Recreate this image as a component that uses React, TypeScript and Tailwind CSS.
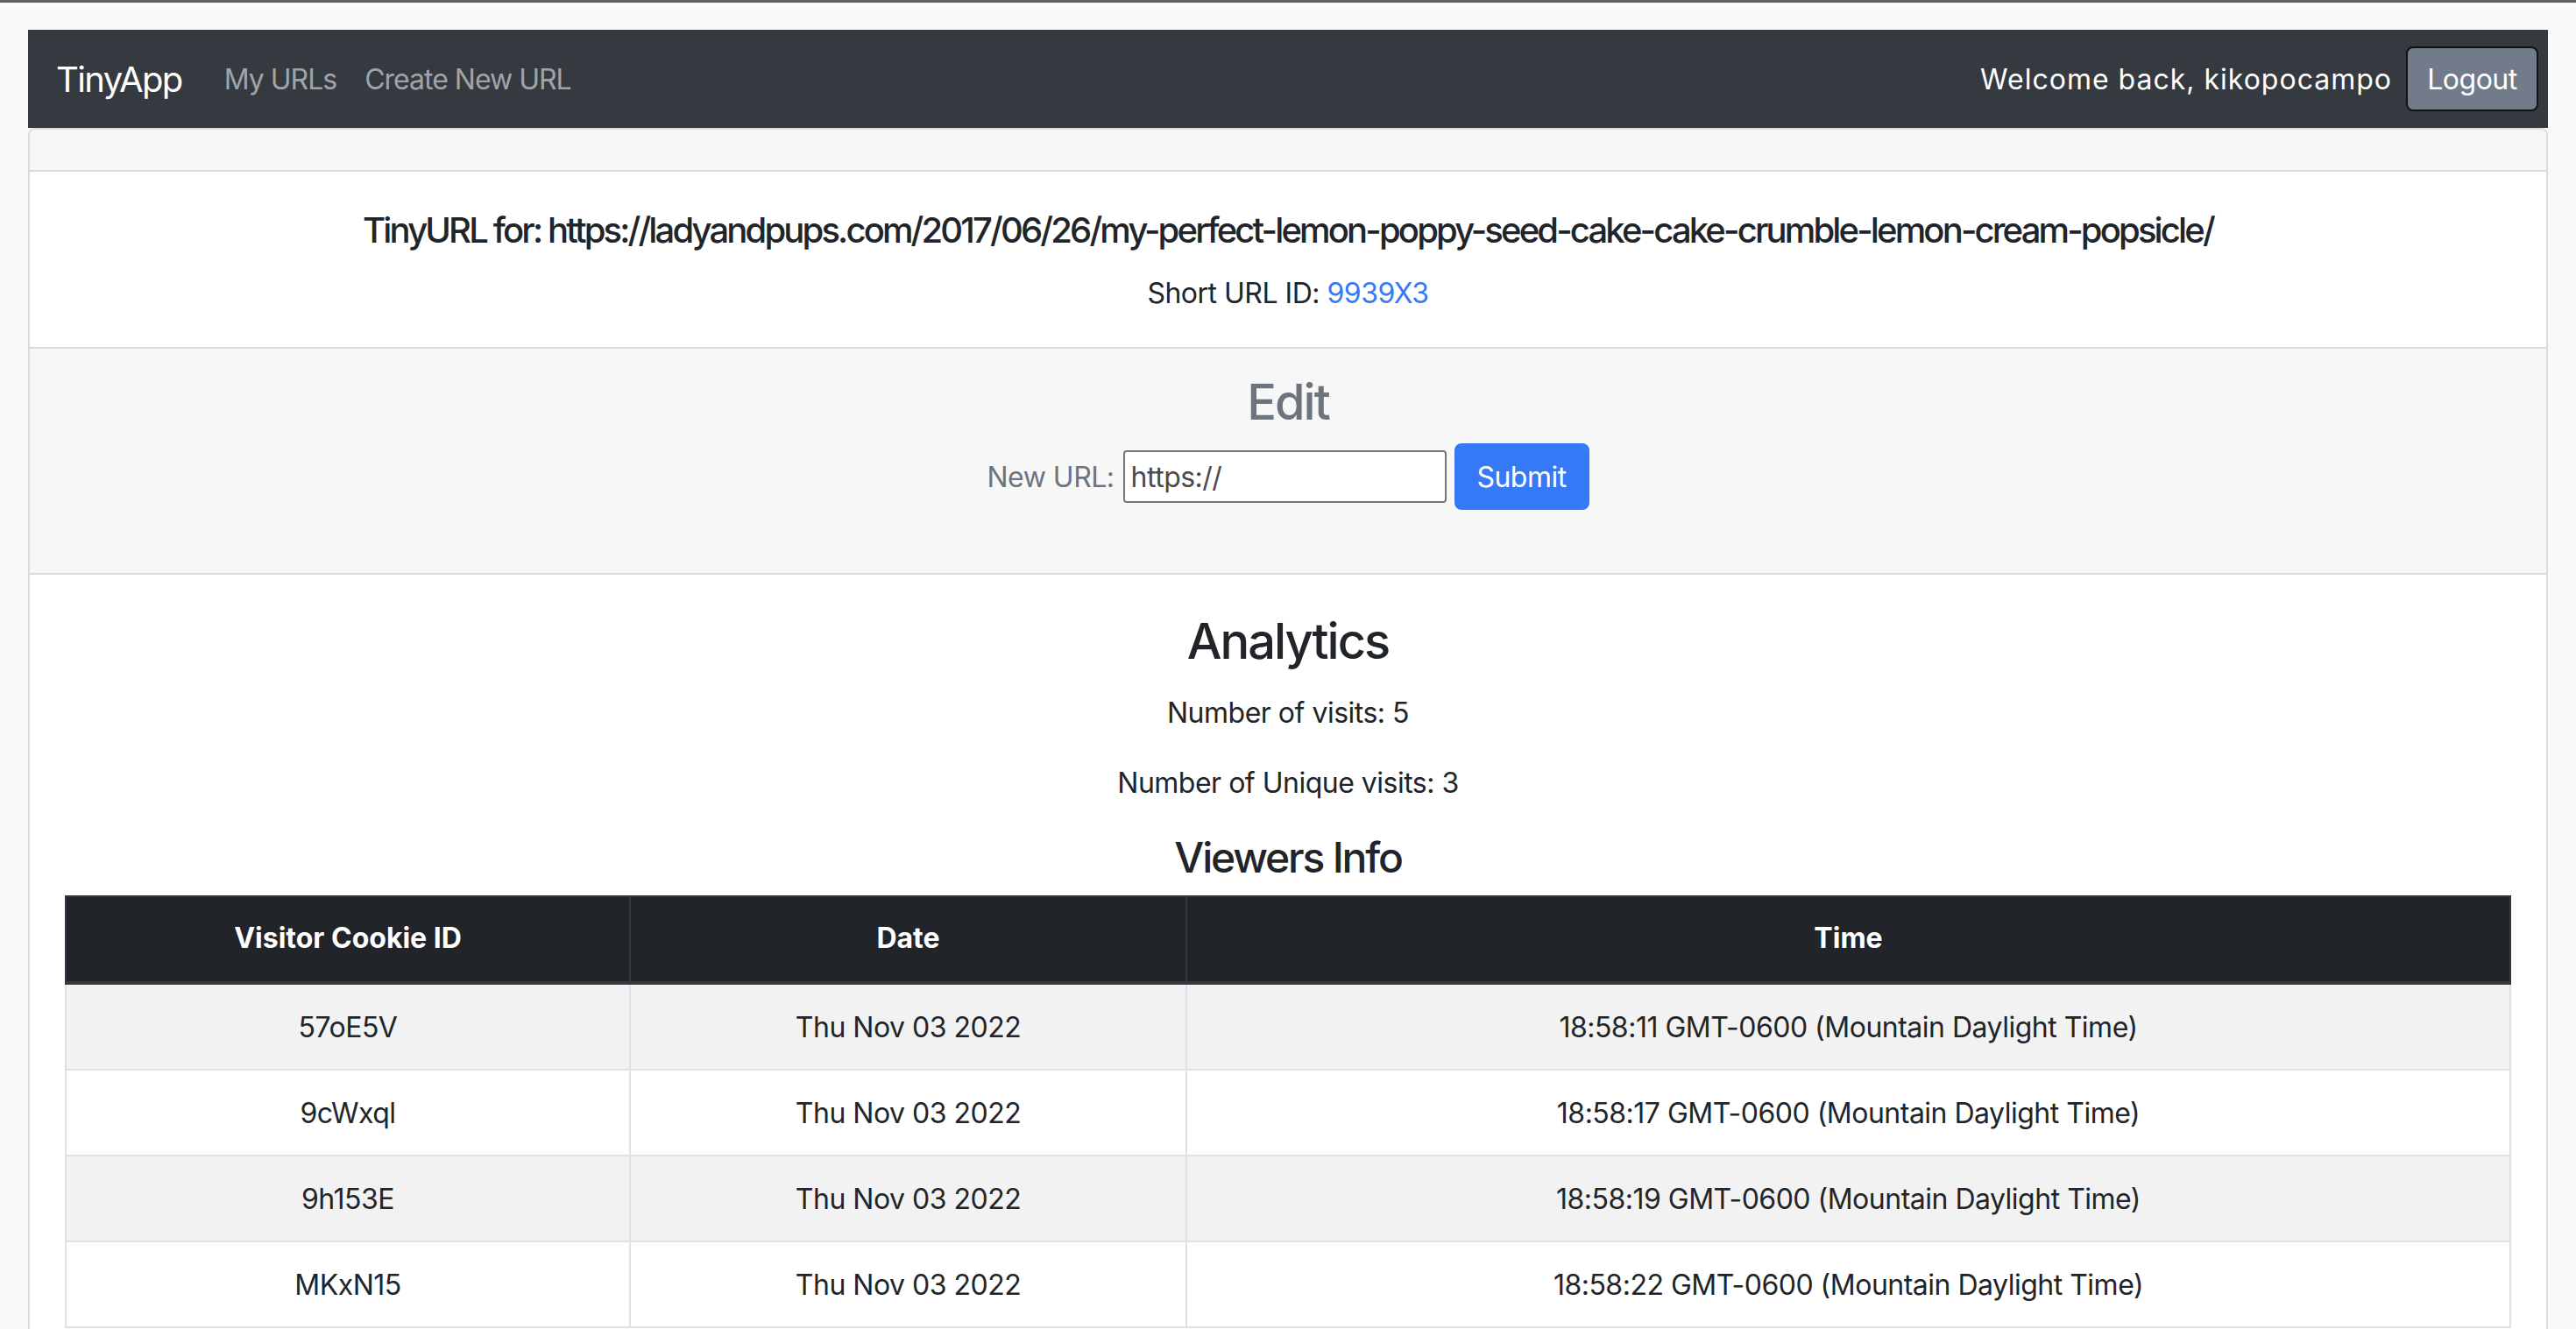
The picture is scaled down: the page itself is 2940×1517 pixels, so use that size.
import React from "react";

const rows = [
  { id: "57oE5V", date: "Thu Nov 03 2022", time: "18:58:11 GMT-0600 (Mountain Daylight Time)" },
  { id: "9cWxql", date: "Thu Nov 03 2022", time: "18:58:17 GMT-0600 (Mountain Daylight Time)" },
  { id: "9h153E", date: "Thu Nov 03 2022", time: "18:58:19 GMT-0600 (Mountain Daylight Time)" },
  { id: "MKxN15", date: "Thu Nov 03 2022", time: "18:58:22 GMT-0600 (Mountain Daylight Time)" },
];

export default function App() {
  return (
    <div
      className="min-h-screen bg-[#f8f9fa] border-t-[3px] border-[#5f6062] text-[#212529] text-[32px] leading-[48px] tracking-[-0.5px]"
      style={{ fontFamily: "Inter, 'Noto Sans', sans-serif" }}
    >
      <div className="px-8 pt-[31px]">
        <nav className="h-[112px] bg-[#343a40] flex items-center pl-8 pr-[11px]">
          <span className="text-white text-[40px] leading-[60px] mr-8 tracking-[-1.6px] pt-[2px]">TinyApp</span>
          <span className="text-[#a1a4a7] px-4 pt-[2px] tracking-[-1px]">My URLs</span>
          <span className="text-[#a1a4a7] px-4 pt-[2px] tracking-[-1px]">Create New URL</span>
          <div className="ml-auto flex items-center">
            <span className="text-white mr-4 tracking-[1px] pt-[2px]">Welcome back, kikopocampo</span>
            <button className="h-[74px] w-[151px] bg-[#727b89] border-2 border-[#111] rounded-[8px] text-white pt-[2px]">
              Logout
            </button>
          </div>
        </nav>

        <div className="border-2 border-[#dcdcdc] rounded-t-[8px] bg-white min-h-[1400px]">
          <div className="h-[48px] bg-[#f7f7f7] border-b-2 border-[#d9d9d9] rounded-t-[6px]" />

          <div className="px-10 pt-[43px] pb-[37px] text-center bg-white border-b-2 border-[#d9d9d9]">
            <h5 className="text-[40px] leading-[48px] font-medium mb-6 tracking-[-2.85px]">
              TinyURL for: https://ladyandpups.com/2017/06/26/my-perfect-lemon-poppy-seed-cake-cake-crumble-lemon-cream-popsicle/
            </h5>
            <p>
              Short URL ID: <span className="text-[#3579f6]">9939X3</span>
            </p>
          </div>

          <div className="pt-[28px] pb-[72px] text-center bg-[#f7f7f7] border-b-2 border-[#d9d9d9]">
            <h3 className="text-[56px] leading-[67px] font-medium text-[#6c757d] mb-[13px] tracking-[-2px]">Edit</h3>
            <div className="flex items-center justify-center">
              <label className="text-[#6c757d] mr-[10px] pt-[2px]">New URL:</label>
              <div className="w-[369px] h-[60px] border-2 border-[#767676] rounded-[4px] bg-white flex items-center pl-[7px] pt-[2px] text-left text-[#4a4a4a]">
                https://
              </div>
              <button className="ml-[9px] w-[154px] h-[76px] bg-[#3579f6] rounded-[8px] text-white pt-[2px]">
                Submit
              </button>
            </div>
          </div>

          <div className="px-10 pt-[43px] pb-10 text-center">
            <h3 className="text-[56px] leading-[67px] font-medium mb-[24px] tracking-[-2px]">Analytics</h3>
            <p className="mb-8">Number of visits: 5</p>
            <p className="mb-8">Number of Unique visits: 3</p>
            <h4 className="text-[48px] leading-[58px] font-medium mb-[14px] tracking-[-2.2px]">Viewers Info</h4>
            <table className="w-full border-collapse text-center">
              <thead>
                <tr className="bg-[#212529] text-white tracking-normal">
                  <th className="w-[644px] border-2 border-[#32383e] border-b-4 pt-[23px] pb-[25px] font-bold">Visitor Cookie ID</th>
                  <th className="w-[635px] border-2 border-[#32383e] border-b-4 pt-[23px] pb-[25px] font-bold">Date</th>
                  <th className="border-2 border-[#32383e] border-b-4 pt-[23px] pb-[25px] font-bold">Time</th>
                </tr>
              </thead>
              <tbody>
                {rows.map((r, i) => (
                  <tr key={r.id} className={i % 2 === 0 ? "bg-[#f2f2f2]" : "bg-white"}>
                    <td className="border-2 border-[#dee2e6] pt-[25px] pb-[23px]">{r.id}</td>
                    <td className="border-2 border-[#dee2e6] pt-[25px] pb-[23px]">{r.date}</td>
                    <td className="border-2 border-[#dee2e6] pt-[25px] pb-[23px]">{r.time}</td>
                  </tr>
                ))}
              </tbody>
            </table>
          </div>
        </div>
      </div>
    </div>
  );
}
